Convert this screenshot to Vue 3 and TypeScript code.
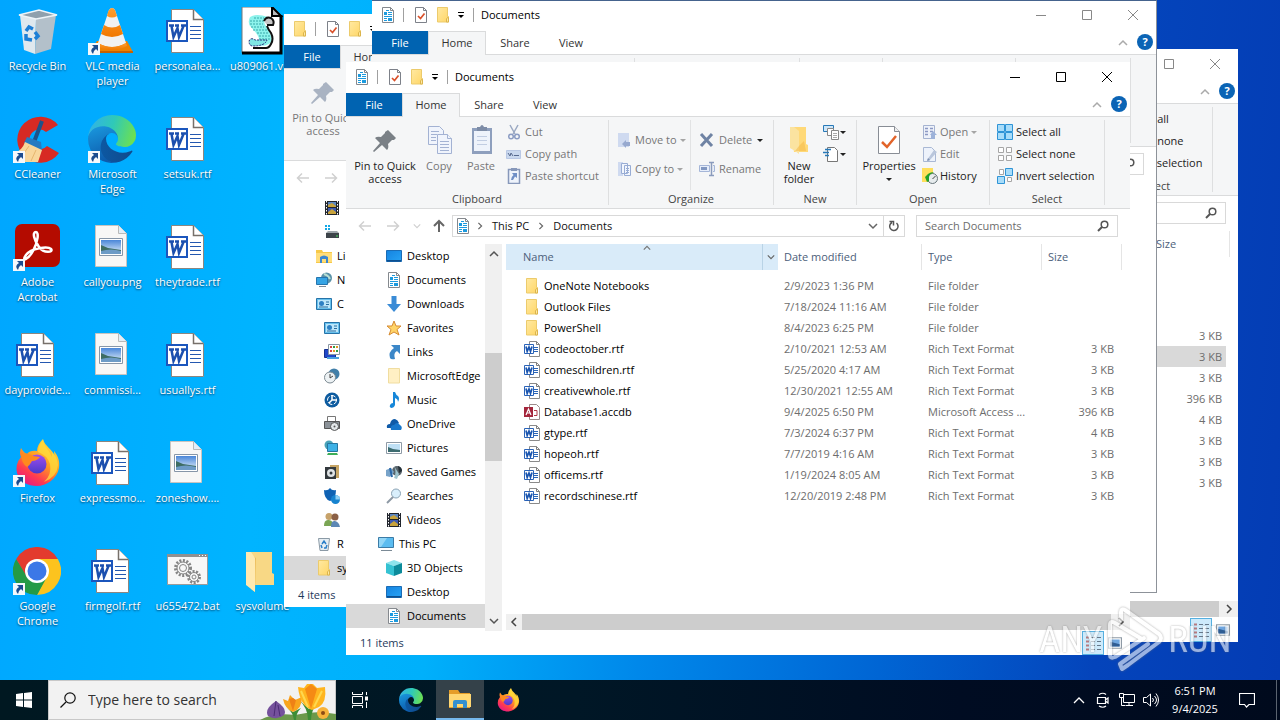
<script setup lang="ts">
import { h } from 'vue'

type Part = 'title' | 'file' | 'home' | 'tabs' | 'pin' | 'ribbon' | 'select' | 'path' | 'sizes' | 'files' | 'status' | 'bars'
interface NavItem { icon: string; label: string; level: number; selected?: boolean }
interface Win {
  id: string; x: number; y: number; title: string; icon: string; status: string
  active?: boolean; pinOff?: boolean; edged?: boolean; selectedFile?: string; nav: NavItem[]; parts: Part[]
}

const Icon = (p: { name: string; size?: number }) =>
  h('svg', { width: p.size ?? 16, height: p.size ?? 16, 'aria-hidden': 'true' }, [h('use', { href: '#' + p.name })])
Icon.props = ['name', 'size']

const has = (w: Win, p: Part) => w.active || w.parts.includes(p)

const desktop = [
  { label: 'Recycle Bin', icon: 'recycle', c: 1, r: 1 },
  { label: 'CCleaner', icon: 'ccleaner', c: 1, r: 2, link: true },
  { label: 'Adobe Acrobat', icon: 'acrobat', c: 1, r: 3, link: true },
  { label: 'dayprovide...', icon: 'word', c: 1, r: 4 },
  { label: 'Firefox', icon: 'firefox', c: 1, r: 5, link: true },
  { label: 'Google Chrome', icon: 'chrome', c: 1, r: 6, link: true },
  { label: 'VLC media player', icon: 'vlc', c: 2, r: 1, link: true },
  { label: 'Microsoft Edge', icon: 'edge', c: 2, r: 2, link: true },
  { label: 'callyou.png', icon: 'image', c: 2, r: 3 },
  { label: 'commissi...', icon: 'image', c: 2, r: 4 },
  { label: 'expressmo...', icon: 'word', c: 2, r: 5 },
  { label: 'firmgolf.rtf', icon: 'word', c: 2, r: 6 },
  { label: 'personalea...', icon: 'word', c: 3, r: 1 },
  { label: 'setsuk.rtf', icon: 'word', c: 3, r: 2 },
  { label: 'theytrade.rtf', icon: 'word', c: 3, r: 3 },
  { label: 'usuallys.rtf', icon: 'word', c: 3, r: 4 },
  { label: 'zoneshow....', icon: 'image', c: 3, r: 5 },
  { label: 'u655472.bat', icon: 'bat', c: 3, r: 6 },
  { label: 'u809061.vbs', icon: 'vbs', c: 4, r: 1 },
  { label: 'sysvolume', icon: 'bigfolder', c: 4, r: 6 },
]

const files = [
  ['OneNote Notebooks', '2/9/2023 1:36 PM', 'File folder', '', 'folder'],
  ['Outlook Files', '7/18/2024 11:16 AM', 'File folder', '', 'folder'],
  ['PowerShell', '8/4/2023 6:25 PM', 'File folder', '', 'folder'],
  ['codeoctober.rtf', '2/10/2021 12:53 AM', 'Rich Text Format', '3 KB', 'word16'],
  ['comeschildren.rtf', '5/25/2020 4:17 AM', 'Rich Text Format', '3 KB', 'word16'],
  ['creativewhole.rtf', '12/30/2021 12:55 AM', 'Rich Text Format', '3 KB', 'word16'],
  ['Database1.accdb', '9/4/2025 6:50 PM', 'Microsoft Access ...', '396 KB', 'access'],
  ['gtype.rtf', '7/3/2024 6:37 PM', 'Rich Text Format', '4 KB', 'word16'],
  ['hopeoh.rtf', '7/7/2019 4:16 AM', 'Rich Text Format', '3 KB', 'word16'],
  ['officems.rtf', '1/19/2024 8:05 AM', 'Rich Text Format', '3 KB', 'word16'],
  ['recordschinese.rtf', '12/20/2019 2:48 PM', 'Rich Text Format', '3 KB', 'word16'],
]

const docNav: NavItem[] = [
  { icon: 'desk', label: 'Desktop', level: 2 },
  { icon: 'doc', label: 'Documents', level: 2 },
  { icon: 'down', label: 'Downloads', level: 2 },
  { icon: 'star', label: 'Favorites', level: 2 },
  { icon: 'links', label: 'Links', level: 2 },
  { icon: 'palefolder', label: 'MicrosoftEdge', level: 2 },
  { icon: 'music', label: 'Music', level: 2 },
  { icon: 'cloud', label: 'OneDrive', level: 2 },
  { icon: 'pics', label: 'Pictures', level: 2 },
  { icon: 'games', label: 'Saved Games', level: 2 },
  { icon: 'lens', label: 'Searches', level: 2 },
  { icon: 'video', label: 'Videos', level: 2 },
  { icon: 'pc', label: 'This PC', level: 1 },
  { icon: 'cube', label: '3D Objects', level: 2 },
  { icon: 'desk', label: 'Desktop', level: 2 },
  { icon: 'doc', label: 'Documents', level: 2, selected: true },
]

const sysNav: NavItem[] = [
  { icon: 'video', label: '', level: 2 },
  { icon: 'drive', label: '', level: 2 },
  { icon: 'lib', label: 'Li', level: 1 },
  { icon: 'net', label: 'N', level: 1 },
  { icon: 'panel', label: 'C', level: 1 },
  { icon: 'panel', label: '', level: 2 },
  { icon: 'appear', label: '', level: 2 },
  { icon: 'clock', label: '', level: 2 },
  { icon: 'ease', label: '', level: 2 },
  { icon: 'printer', label: '', level: 2 },
  { icon: 'netshare', label: '', level: 2 },
  { icon: 'programs', label: '', level: 2 },
  { icon: 'shield', label: '', level: 2 },
  { icon: 'users', label: '', level: 2 },
  { icon: 'bin16', label: 'R', level: 1 },
  { icon: 'folder', label: 'sy', level: 1, selected: true },
]

const windows: Win[] = [
  { id: 'a', x: 454, y: 49, title: 'Documents', icon: 'doc', status: '', selectedFile: 'comeschildren.rtf', nav: [], parts: ['select', 'sizes', 'bars'] },
  { id: 'b', x: 284, y: 14, title: 'sysvolume', icon: 'folder', status: '4 items', pinOff: true, nav: sysNav, parts: ['file', 'home', 'pin', 'status'] },
  { id: 'c', x: 372, y: 0, title: 'Documents', icon: 'doc', status: '', edged: true, nav: [], parts: ['title', 'file', 'home', 'tabs'] },
  { id: 'd', x: 346, y: 62, title: 'Documents', icon: 'doc', status: '11 items', active: true, nav: docNav, parts: [] },
]
</script>

<template>
  <div class="screen">
    <svg class="defs" aria-hidden="true">
      <defs>
        <linearGradient id="gE1" x1="0" y1="0" x2="1" y2="0"><stop offset="0" stop-color="#0c59a4" /><stop offset="1" stop-color="#114a8b" /></linearGradient>
        <linearGradient id="gE2" x1="0" y1="0" x2="0.3" y2="1"><stop offset="0" stop-color="#1b9de2" /><stop offset="1" stop-color="#0d5cad" /></linearGradient>
        <linearGradient id="gE3" x1="0" y1="0.3" x2="1" y2="0.5"><stop offset="0" stop-color="#32b1e8" /><stop offset="0.5" stop-color="#2fc9b8" /><stop offset="1" stop-color="#6ce052" /></linearGradient>
        <linearGradient id="gF" x1="0.8" y1="0" x2="0.2" y2="1"><stop offset="0" stop-color="#ffe742" /><stop offset="0.45" stop-color="#ff9a22" /><stop offset="0.75" stop-color="#ff3b50" /><stop offset="1" stop-color="#e3158b" /></linearGradient>
        <linearGradient id="gP" x1="0" y1="0" x2="0" y2="1"><stop offset="0" stop-color="#a04cf0" /><stop offset="1" stop-color="#4a3bc8" /></linearGradient>
        <linearGradient id="gFo" x1="0" y1="0" x2="1" y2="1"><stop offset="0" stop-color="#ffe9a2" /><stop offset="1" stop-color="#ffd666" /></linearGradient>
        <linearGradient id="gD" x1="0" y1="0" x2="1" y2="1"><stop offset="0" stop-color="#1583e0" /><stop offset="1" stop-color="#27a3f5" /></linearGradient>
        <linearGradient id="gSky" x1="0" y1="0" x2="0" y2="1"><stop offset="0" stop-color="#4a86d8" /><stop offset="1" stop-color="#e6f2fb" /></linearGradient>
        <linearGradient id="gO" x1="0" y1="0" x2="0" y2="1"><stop offset="0" stop-color="#ff9d2e" /><stop offset="1" stop-color="#f07800" /></linearGradient>
      </defs>
      <symbol id="recycle" viewBox="0 0 48 48"><path d="m7 8 16 4-1 35-11-4z" fill="#dfe8ee" /><path d="m43 8-20 4-1 35 16-5z" fill="#b3c0ca" /><path d="m6 8 20-5 18 5-21 4z" fill="#8fa0ad" stroke="#eef4f8" stroke-width="1.500" /><g fill="none" stroke="#1d7fd6" stroke-width="3.500"><path d="m13 24 3-4 4 2M22 25l3 4-3 3M19 33l-6-1 0-5" /></g></symbol>
      <symbol id="vlc" viewBox="0 0 48 48"><path d="M9 34h30l6 11-1 1H2l-1-1z" fill="#ee8100" /><path d="M2 44h43v2H2z" fill="#c96100" /><path d="M10 36 21 3q3-4 6 0l11 33q-14 8-28 0" fill="#f1f1f1" /><path d="m20 5 1-2q3-4 6 0l2 6q-5 3-10 0zM16 18q8 5 16 0l3 9q-11 6-22 0z" fill="url(#gO)" /><path d="m10 36-1 3q15 8 30 0l-1-3q-14 8-28 0" fill="url(#gO)" /></symbol>
      <symbol id="word" viewBox="2 0 48 48"><path d="M10.500 2.500h22l10 10v33h-32z" fill="#fff" stroke="#8b8680" /><path d="M32.500 2.500v10h10" fill="#fff" stroke="#77706a" stroke-width="1.500" /><path d="M29 19.500h11M29 23.500h11M29 27.500h11M29 31.500h11" stroke="#2458b0" /><path d="M6 14h20v20H6z" fill="#fff" stroke="#1b56bd" stroke-width="2" /><path d="M8 18.500h5M14 18.500h4M20 18.500h5M10.500 19l2 11 4-9 1.500 9 4.500-11" fill="none" stroke="#1b4fae" stroke-width="2.500" /></symbol>
      <symbol id="image" viewBox="1 0 48 48"><path d="M8.500 2.500h23l8 8v33h-31z" fill="#f8f7f6" stroke="#c9c4c0" /><path d="M31.500 2.500v8h8" fill="#e3eef7" stroke="#b9b9b9" /><path d="M12.500 15.500h23v17h-23z" fill="#fff" stroke="#8796a8" /><path d="M14 17h20v14H14z" fill="url(#gSky)" /><path d="m14 22 7 3 13 2v4H14z" fill="#3e6d63" /><path d="M14 28q10-3 20 0v3H14z" fill="#6d9bc6" /></symbol>
      <symbol id="bat" viewBox="0 0 48 48"><path d="M4.500 8.500h40v29h-40z" fill="#f7f7f7" stroke="#9b9b9b" /><path d="M4 7h41v3H4z" fill="#909090" /><path d="M36 8.500h7" stroke="#fff" stroke-dasharray="1 2" /><g fill="#f7f7f7" stroke="#858585"><circle cx="20" cy="21" r="7.500" stroke-dasharray="2 1.500" stroke-width="3" /><circle cx="20" cy="21" r="6" /><circle cx="20" cy="21" r="3.500" /><circle cx="31" cy="30" r="5.500" stroke-dasharray="2 1.400" stroke-width="3" /><circle cx="31" cy="30" r="4.500" /><circle cx="31" cy="30" r="2" /></g></symbol>
      <symbol id="bigfolder" viewBox="0 0 48 48"><path d="M10 5h24v21l2 1v11H17z" fill="#f8d885" /><path d="m18 11-1 34-4-3V8z" fill="#edbf5e" /><path d="M8 5h5l4 6v34l-9-7z" fill="#ffe9b0" /></symbol>
      <symbol id="vbs" viewBox="1 1 48 48"><path d="M5 1h31l8 8v38H5z" fill="#fff" stroke="#777" /><path d="M44 9v38H5" fill="none" stroke="#000" stroke-width="3" /><path d="M35 1v9h9z" fill="#bbb" stroke="#000" stroke-width="2" /><path d="M13 11q6-4 18 0-6 4-2 9t6 14q-3 8-17 5 6-4 3-9t-7-9-1-10" fill="#8df3ec" /><path d="M17 12h10M13 15h14M13 18h13M14 21h13M16 24h14M20 27h12M22 30h12M22 33h12" stroke="#38a9ab" stroke-dasharray="2 1" /><path d="M27 15q2-5 7-3 4 3 2 7h-6" fill="#c6c6c6" stroke="#111" stroke-width="2" /><path d="M30 20q1 3 4 7 3 6 0 11-2 4-5 4H16" fill="none" stroke="#111" stroke-width="2" /><path d="M12 35q2-4 6-1 8 0 12 0-2 6-14 6-4 0-4-5z" fill="#7fe7e4" stroke="#227" stroke-dasharray="2 1" /></symbol>
      <symbol id="ccleaner" viewBox="0 0 48 48"><path d="M45 10A23 23 0 1 0 46 38L34 31a10 10 0 1 1-1-14z" fill="#d72a23" /><path d="M29 6 21 27" stroke="#1e5289" stroke-width="4" /><path d="m14 22 14 5 1 9-18-8z" fill="#257ac1" /><path d="m12 27 17 8-4 12H7L1 38q8-2 11-11" fill="#f8d69b" /><path d="m16 31-7 10M23 35l-5 11" stroke="#e6b66e" /></symbol>
      <symbol id="edge" viewBox="0 0 256 256"><path fill="url(#gE1)" d="M231 190.500c-3.400 1.800-6.900 3.400-10.500 4.700a101.500 101.500 0 0 1-35.900 6.400c-47.300 0-88.500-32.500-88.500-74.300a31.500 31.500 0 0 1 16.400-27.300c-42.800 1.800-53.800 46.400-53.800 72.500 0 73.900 68.100 81.400 82.800 81.400 7.900 0 19.800-2.300 27-4.600l1.300-.4a128.300 128.300 0 0 0 66.600-52.800 4 4 0 0 0-5.400-5.600z" /><path fill="url(#gE2)" d="M105.700 241.400a79.200 79.200 0 0 1-22.700-21.300 80.700 80.700 0 0 1 29.500-120c3.200-1.500 8.500-4.100 15.600-4a32.400 32.400 0 0 1 25.700 13 31.900 31.900 0 0 1 6.300 18.700c0-.2 24.500-79.600-80-79.600-43.900 0-80 41.700-80 78.200a130.200 130.200 0 0 0 12.100 56 128 128 0 0 0 156.400 67 75.500 75.500 0 0 1-62.800-8z" /><path fill="url(#gE3)" d="M152.300 148.900c-.8 1-3.300 2.500-3.300 5.700 0 2.600 1.700 5.100 4.700 7.200 14.400 10 41.500 8.700 41.600 8.700a59.600 59.600 0 0 0 30.300-8.300 61.400 61.400 0 0 0 30.400-52.900c.3-22.400-8-37.300-11.300-43.900C223.500 23.900 177.700 0 128 0A128 128 0 0 0 0 126.200c.5-36.500 36.800-66 80-66 3.500 0 23.500.3 42 10.100 16.300 8.600 24.900 18.900 30.800 29.200 6.200 10.700 7.300 24.100 7.300 29.500s-2.700 13.300-7.800 19.900z" /></symbol>
      <symbol id="acrobat" viewBox="0 0 48 48"><rect x="2" y="1" width="45" height="43" rx="7" fill="#b40b00" /><path d="M23 9c-4 0-2 8 3 15s15 5 12 2-20-1-25 6 2 5 7-4 6-19 3-19z" fill="none" stroke="#fff" stroke-width="2.500" /></symbol>
      <symbol id="firefox" viewBox="0 0 48 48"><path d="M8 9q-2 5 0 9Q2 25 4 34c3 9 11 13 20 13s20-7 22-18c1-7-1-12-5-17q0 4 1 6C39 9 32 8 30 0q-6 6-6 12-7-1-10 3-3-1-6-6" fill="url(#gF)" /><path d="M30 1q-5 6-5 12 9 3 12 12 2 11-6 18 13-5 14-17-1-9-6-13 0 4 0 5C35 9 31 8 30 1" fill="#ffdc3c" opacity=".75" /><circle cx="24" cy="25" r="9.500" fill="url(#gP)" /><path d="M8 14q8 0 12 3l7 1q-3 4-8 4-2 4-5 6-6-4-6-14" fill="#ff8a1e" /></symbol>
      <symbol id="chrome" viewBox="0 0 48 48"><path d="M44.800 12A24 24 0 0 1 24 48l9-18 1-18z" fill="#fcc31e" /><path d="M3.200 12A24 24 0 0 0 24 48l10-18H15z" fill="#249a46" /><path d="M24 12h20.800L36 24z" fill="#fcc31e" /><path d="M3.200 12A24 24 0 0 1 44.800 12H24L14 20v10z" fill="#e33b2e" /><circle cx="24" cy="24" r="12" fill="#fff" /><circle cx="24" cy="24" r="9.500" fill="#3b78e7" /></symbol>
      <symbol id="shortcut" viewBox="0 0 12 12"><path d="M0 0h12v12H0z" fill="#f5f8fb" /><path d="M4 2h6v6L8 6q-3 2-3 5-4-4 1-7z" fill="#1c4c8f" /></symbol>

      <symbol id="folder" viewBox="0 0 16 16"><path d="M2.500.5h10v9h1V15h-11z" fill="url(#gFo)" stroke="#eccb6c" /><path d="M12.500 10.500h1V15h-2v-3z" fill="#ffe9a2" stroke="#dbb44c" /></symbol>
      <symbol id="palefolder" viewBox="0 0 16 16"><path d="M2.500.5h11V15h-11z" fill="#fff0c4" stroke="#f0dda0" /></symbol>
      <symbol id="doc" viewBox="0 0 16 16"><path d="M2.500.5h8l3 3v12h-11z" fill="#fff" stroke="#85898e" /><path d="M10.500.5v3h3" fill="none" stroke="#85898e" /><path d="M6 3h3v1H6zM4 5h3v3H4zM8 5h4v1H8zM8 7h4v1H8zM4 9h8v1H4zM4 11h3v1H4zM8 11h4v3H8zM4 13h3v1H4z" fill="#1c9ade" /></symbol>
      <symbol id="check" viewBox="0 0 16 16"><path d="M2.500.5h8l3 3v12h-11z" fill="#fff" stroke="#7d8189" /><path d="M10.500.5v3h3" fill="none" stroke="#7d8189" /><path d="m5 9 2.500 2.500 4-5" fill="none" stroke="#d9502a" stroke-width="1.700" /></symbol>
      <symbol id="word16" viewBox="0 0 16 16"><path d="M5.500.5h7l3 3v12h-10z" fill="#fff" stroke="#8a8a8a" /><path d="M12.500.5v3h3" fill="none" stroke="#7d7d7d" /><path d="M10 6h4v1h-4zM10 8h4v1h-4zM10 10h4v1h-4z" fill="#2b66b8" /><path d="M.5 3.500h9v9h-9z" fill="#fff" stroke="#2a63b8" /><path d="m2 5.500 1.200 5L5 6l1.500 4.500L8 5.500" fill="none" stroke="#1b56b0" stroke-width="1.700" /></symbol>
      <symbol id="access" viewBox="0 0 16 16"><path d="M5.500.5h7l3 3v12h-10z" fill="#fff" stroke="#9b8b8b" /><path d="M10 6.500h3v5h-3" fill="none" stroke="#b23a48" /><path d="M0 3h9v10H0z" fill="#a4263c" /><path d="m2 11 2.500-6L7 11M3 9h3" fill="none" stroke="#fff" stroke-width="1.200" /></symbol>
      <symbol id="desk" viewBox="0 0 16 16"><path d="M.5 2.500h15v11H.5z" fill="url(#gD)" stroke="#1b6cb5" /><path d="M1 12h14v1.500H1z" fill="#0c4f8f" /></symbol>
      <symbol id="down" viewBox="0 0 16 16"><path d="M5.500 0h5v8H15l-7 8-7-8h4.500z" fill="#3a8bd6" /></symbol>
      <symbol id="star" viewBox="0 0 16 16"><path d="m8 1 2 5h5l-4 3.500L13 15l-5-3-5 3 2-5.500L1 6h5z" fill="#ffd469" stroke="#d68b33" /></symbol>
      <symbol id="links" viewBox="0 0 16 16"><path d="M5 1h9v9l-3-3q-4 2-2 8-4 1-5-1-2-6 4-10z" fill="#3b87c8" /></symbol>
      <symbol id="music" viewBox="0 0 16 16"><path d="M7 0h2q1 3 3 4 2 2 0 6 0-3-3-4v7q-1 3-4 3-2-1-1-3t3-2z" fill="#1787d9" /></symbol>
      <symbol id="cloud" viewBox="0 0 16 16"><path d="M1 12q-1-4 3-4 1-5 5-5 3 1 4 4l-7 5z" fill="#0f5ba8" /><path d="M5 14q-1-5 3-5 3-4 6 0 3 2 1 5z" fill="#1877cb" /></symbol>
      <symbol id="pics" viewBox="0 0 16 16"><path d="M.5 2.500h15v11H.5z" fill="#fff" stroke="#8e9aa6" /><path d="M2 4h12v8H2z" fill="#bfe0f5" /><path d="m2 7 5 2 7 1v2H2z" fill="#3d6c70" /></symbol>
      <symbol id="games" viewBox="0 0 16 16"><circle cx="11" cy="7" r="5" fill="#59646b" /><path d="M8 2q3 6 0 12l3 1 2-5z" fill="#9ec4cf" /><path d="m0 6 5-2 3 4-4 5-4-1z" fill="#78a3c9" /><path d="m4 4 2 9" stroke="#2a67a8" stroke-width="2" /><path d="M12 2q4 1 4 5l-3 2z" fill="#243038" /></symbol>
      <symbol id="lens" viewBox="0 0 16 16"><circle cx="10" cy="5.500" r="4.500" fill="#d9effc" stroke="#8aa2b3" /><path d="m7 9-6 6" stroke="#8d99a5" stroke-width="2" /></symbol>
      <symbol id="video" viewBox="0 0 16 16"><path d="M1 1h14v14H1z" fill="#20242c" /><path d="M4 2h8v5H4z" fill="#5c86c0" /><path d="M4 8h8v6H4z" fill="#3b58b0" /><path d="m4 5 4-2 4 3v1H4zM4 12l4-3 4 3v2H4z" fill="#c8a33c" /><path d="M2.500 1v14M13.500 1v14" stroke="#fff" stroke-dasharray="1.500 1.500" /></symbol>
      <symbol id="pc" viewBox="0 0 16 16"><path d="M.5 1.500h15v10H.5z" fill="#5bbcf0" stroke="#3b7ba6" /><path d="M1 2h8L3 11H1z" fill="#92d6f7" /><path d="M3 14.500h11" stroke="#7b8a96" /></symbol>
      <symbol id="cube" viewBox="0 0 16 16"><path d="m0 3 8-3 8 3-8 3z" fill="#8de4ec" /><path d="m0 3 8 3v10l-8-3z" fill="#35c2d2" /><path d="m16 3-8 3v10l8-3z" fill="#0c8b9b" /></symbol>
      <symbol id="drive" viewBox="0 0 16 16"><path d="M1 1h2v2H1zM4 1h2v2H4zM1 4h2v2H1zM4 4h2v2H4z" fill="#12a7e6" /><path d="M2 9h13v5H2z" fill="#3d444a" /><path d="m4 7-2 2h13l-2-2z" fill="#9ea5aa" /><path d="M12 12h2" stroke="#4ae05d" /></symbol>
      <symbol id="lib" viewBox="0 0 16 16"><path d="M0 2h6l1 2h9v11H0z" fill="#f7c948" /><path d="M0 5h16v9H0z" fill="#ffdd7a" /><path d="M4 15V9q4-3 8 0v6h-2v-4H6v4z" fill="#3b87d0" /></symbol>
      <symbol id="net" viewBox="0 0 16 16"><circle cx="10.500" cy="6" r="5.500" fill="#5a91a8" /><path d="M8 2q4 1 6 5" stroke="#b8dfd4" stroke-width="2" fill="none" /><path d="M.5 5.500h11v7H.5z" fill="#35a4e4" stroke="#2575ae" /><path d="M3 14.500h7" stroke="#7b8a96" /></symbol>
      <symbol id="panel" viewBox="0 0 16 16"><path d="M.5 2.500h15v11H.5z" fill="#67c1ee" stroke="#2673a8" /><path d="M2 4h12v8H2z" fill="#bde6fa" /><circle cx="5.500" cy="7.500" r="2.500" fill="#2d80c4" /><path d="M10 6h3M10 8.500h3M3 11h9" stroke="#276da0" /></symbol>
      <symbol id="appear" viewBox="0 0 16 16"><path d="M.5 5.500h11v8H.5z" fill="#2048c8" stroke="#153090" /><path d="M4.500.5h11v10h-11z" fill="#fff" stroke="#8a96a3" /><path d="M6 3h2M6 7h2" stroke="#d94444" stroke-width="2" /><path d="M9 3h2M12 7h2" stroke="#2d9b45" stroke-width="2" /><path d="M12 3h2M9 7h2" stroke="#e09b25" stroke-width="2" /><path d="M3 13h12v2H3z" fill="#4aa0e0" /></symbol>
      <symbol id="clock" viewBox="0 0 16 16"><circle cx="10" cy="6" r="5.500" fill="#417fa9" /><circle cx="6" cy="9.500" r="5.500" fill="#edf2f4" stroke="#7d8a92" /><path d="M6 6v4l3-2" stroke="#444" fill="none" /></symbol>
      <symbol id="ease" viewBox="0 0 16 16"><circle cx="8" cy="8" r="7.500" fill="#0d5b9f" /><circle cx="8" cy="8" r="4.500" fill="none" stroke="#fff" stroke-dasharray="5 1.500" /><path d="M8 3v5h5M8 8l-3 3" stroke="#fff" stroke-width="1.500" fill="none" /></symbol>
      <symbol id="printer" viewBox="0 0 16 16"><path d="M3.500.5h8v5h-8z" fill="#fff" stroke="#777" /><path d="M.5 5.500h15v7H.5z" fill="#8b9298" stroke="#555" /><circle cx="10.500" cy="10.500" r="4" fill="#e4e8ea" stroke="#555" /><circle cx="10.500" cy="10.500" r="1" fill="#555" /></symbol>
      <symbol id="netshare" viewBox="0 0 16 16"><circle cx="5" cy="5" r="4.500" fill="#4aa3b8" /><path d="M3.500 3.500h10v8h-10z" fill="#3db1e6" stroke="#2675a0" /><path d="M4 13h9l1 2H3z" fill="#3cad58" /></symbol>
      <symbol id="programs" viewBox="0 0 16 16"><path d="M6 1h9v13H6z" fill="#c7a565" /><path d="M1 3h11v12H1z" fill="#33393d" /><circle cx="7" cy="9" r="4" fill="#e0e4e6" /><circle cx="7" cy="9" r="1.500" fill="#33393d" /></symbol>
      <symbol id="shield" viewBox="0 0 16 16"><path d="M0 2q4 1 6-2 2 3 6 2 0 9-6 11Q0 11 0 2" fill="#0f62b4" /><circle cx="11.500" cy="11.500" r="4.500" fill="#1783cf" /><path d="M11.500 11.500V7a4.500 4.500 0 0 1 4.500 4.500z" fill="#8fd0f5" /></symbol>
      <symbol id="users" viewBox="0 0 16 16"><circle cx="5" cy="4.500" r="3.500" fill="#c7a26a" /><path d="M0 14q0-7 5-6t4 6z" fill="#7aa554" /><circle cx="11" cy="5" r="3.500" fill="#8b6046" /><path d="M7 15q0-7 4-6t5 6z" fill="#5d88b5" /></symbol>
      <symbol id="bin16" viewBox="0 0 16 16"><path d="M2.500 2.500h11l-1.500 12H4z" fill="#e6eef3" stroke="#8b9aa6" /><path d="m6 8 2-3 2 3M11 9l-1 3H8M6 12l-1-3" stroke="#2b7fc9" stroke-width="1.500" fill="none" /></symbol>

      <symbol id="pin" viewBox="0 0 32 32"><path d="m19 6 8 8-2 2h-2l-4 4q1 4-1 6l-5-5-8 7-1-1 7-8-5-5q2-2 6-1l4-4V8z" fill="currentColor" /></symbol>
      <symbol id="copy" viewBox="0 0 32 32"><g fill="#f0f4fc" stroke="#a3b2d3"><path d="M5.500 2.500h11l4 4v14h-15z" /><path d="M8 7.500h8M8 10.500h6M8 13.500h5M8 16.500h5" /><path d="M14.500 10.500h10l4 4v15h-14z" /><path d="M24.500 10.500v4h4M17 17.500h9M17 20.500h9M17 23.500h9M17 26.500h9" /></g></symbol>
      <symbol id="paste" viewBox="0 0 32 32"><path d="M7 4h20v26H7z" fill="#8e9fbd" /><path d="M9 7h16v20H9z" fill="#eef3fb" /><path d="M12 3h3q2-4 4 0h3v4H12z" fill="#7d8ca6" /><path d="M12 12.500h10M12 16.500h10M12 20.500h10" stroke="#c1cde2" /></symbol>
      <symbol id="cut" viewBox="0 0 16 16"><path d="m4 1 5 9M12 1l-5 9" stroke="#9aa8c2" stroke-width="1.500" /><circle cx="5" cy="12.500" r="2.300" fill="none" stroke="#8b9cc3" stroke-width="1.500" /><circle cx="11" cy="12.500" r="2.300" fill="none" stroke="#8b9cc3" stroke-width="1.500" /></symbol>
      <symbol id="cpath" viewBox="0 0 16 16"><path d="M.5 4.500h14v8H.5z" fill="#c9d8ee" stroke="#b9c8e4" /><path d="m2 7 2 3 1-3 2 3M8 9.500h5" stroke="#57698e" fill="none" /></symbol>
      <symbol id="pshort" viewBox="0 0 16 16"><path d="M2.500 1.500h11v14h-11z" fill="#eef3fb" stroke="#8798ba" stroke-width="1.500" /><path d="M5 0h6v3H5z" fill="#8798ba" /><path d="M6 5h5v5L9 8.500 7 12H5q0-3 2.500-5z" fill="#6f8fc6" /></symbol>
      <symbol id="moveto" viewBox="0 0 16 16"><path d="M1 1h11v14H1z" fill="#cfdaf0" /><path d="m5 12 4-4v2h4v4H9v2z" fill="#97a9cf" /></symbol>
      <symbol id="copyto" viewBox="0 0 16 16"><path d="M1 1h5v14H1z" fill="#cfdaf0" /><path d="M4.500 2.500h6v10h-6zM7.500 4.500h6v10h-6z" fill="#f2f6fd" stroke="#98acd4" /><path d="M9 7.500h3M9 9.500h3M9 11.500h3" stroke="#98acd4" /></symbol>
      <symbol id="del" viewBox="0 0 16 16"><path d="m2 2 11 12M13 2 2 14" stroke="#6f83a4" stroke-width="3" /></symbol>
      <symbol id="ren" viewBox="0 0 16 16"><path d="M.5 4.500h10v6H.5zM14 4.500h1.500v6H14" fill="#e7eefa" stroke="#a5b6d8" /><path d="M2 7.500h6" stroke="#8298c2" stroke-width="3" /><path d="M10 1.500h5M10 14.500h5M12.500 1v14" stroke="#8a9bbd" stroke-width="1.500" /></symbol>
      <symbol id="newfolder" viewBox="0 0 32 32"><path d="M8 3h15v17l2 1v7H11z" fill="#ffd978" /><path d="M7 3h4l5 4v23l-4-3-5-3z" fill="#fbe3a0" /><path d="m16 22 5-5 2 10H12z" fill="#f5bc4c" opacity=".6" /></symbol>
      <symbol id="newitem" viewBox="0 0 16 16"><path d="M.5 1.500h10v6H.5z" fill="#cfe6f8" stroke="#2779b8" /><path d="M4.500 4.500h6v7h-6z" fill="#fff" stroke="#888" /><path d="M8.500 6.500h7v9h-7z" fill="#fff" stroke="#888" /><path d="M10 9.500h4M10 11.500h4M10 13.500h4" stroke="#aaa" /></symbol>
      <symbol id="easy" viewBox="0 0 16 16"><path d="M4.500 1.500h7l3 3v11h-10z" fill="#fff" stroke="#777" /><path d="M2 3.500h6M0 6.500h6M2 9.500h4" stroke="#2779b8" stroke-width="1.300" /></symbol>
      <symbol id="props" viewBox="0 0 32 32"><path d="M5.500 2.500h16l5 5v22h-21z" fill="#fff" stroke="#888d95" /><path d="M21.500 2.500v5h5" fill="#eee" stroke="#888d95" /><path d="m9 18 5 5 9-11" fill="none" stroke="#e2642a" stroke-width="2.500" /></symbol>
      <symbol id="open" viewBox="0 0 16 16"><path d="M1.500 1.500h11v13h-11z" fill="#eef2fa" stroke="#a5b3d1" /><path d="M3 4.500h3M8 4.500h3M3 7.500h3M8 7.500h3M3 10.500h3" stroke="#8c99c4" stroke-width="1.500" /><path d="M11 7l4 4h-2v4H9v-4H8z" fill="#9db2d9" /></symbol>
      <symbol id="edit" viewBox="0 0 16 16"><path d="M1.500 1.500h8l4 4v10h-12z" fill="#edf2fb" stroke="#a9b8d4" /><path d="m5 14 7-10 3 2-8 9z" fill="#b9c6dc" /><path d="m5 15 1-3 2 2z" fill="#8093b5" /></symbol>
      <symbol id="history" viewBox="0 0 16 16"><path d="M0 0h11v14H0z" fill="#ffdf5c" /><circle cx="10.500" cy="10.500" r="5" fill="#e7ecee" stroke="#66747a" /><path d="m5 14-2-5 3-3q4-3 6-1-4 0-5 4v4z" fill="#23a127" /><path d="M10.500 11l3-3" stroke="#444" /></symbol>
      <symbol id="selall" viewBox="0 0 16 16"><g fill="#a8dcf9" stroke="#2f94d6"><path d="M.5.5h7v7h-7zM8.500.5h7v7h-7zM.5 8.500h7v7h-7zM8.500 8.500h7v7h-7z" /></g></symbol>
      <symbol id="selnone" viewBox="0 0 16 16"><g fill="#fff" stroke="#a6a6a6"><path d="M1.500 1.500h5v5h-5zM9.500 1.500h5v5h-5zM1.500 9.500h5v5h-5zM9.500 9.500h5v5h-5z" /></g></symbol>
      <symbol id="selinv" viewBox="0 0 16 16"><path d="M2.500 1.500h4v5h-4zM10.500 9.500h4v4h-4z" fill="#fff" stroke="#a6a6a6" /><path d="M8.500.5h7v7h-7zM.5 8.500h7v7h-7z" fill="#a8dcf9" stroke="#2f94d6" /></symbol>

      <symbol id="left" viewBox="0 0 16 16"><path d="M14 8H3M7 3.500 2.500 8 7 12.500" fill="none" stroke="currentColor" stroke-width="1.500" /></symbol>
      <symbol id="right" viewBox="0 0 16 16"><path d="M2 8h11M9 3.500 13.500 8 9 12.500" fill="none" stroke="currentColor" stroke-width="1.500" /></symbol>
      <symbol id="up" viewBox="0 0 16 16"><path d="M8 14V3M3 8l5-5 5 5" fill="none" stroke="currentColor" stroke-width="2" /></symbol>
      <symbol id="chevd" viewBox="0 0 10 10"><path d="m1 3 4 4 4-4" fill="none" stroke="currentColor" stroke-width="1.500" /></symbol>
      <symbol id="chevu" viewBox="0 0 10 10"><path d="m1 7 4-4 4 4" fill="none" stroke="currentColor" stroke-width="1.500" /></symbol>
      <symbol id="chevr" viewBox="0 0 10 10"><path d="m3 1 4 4-4 4" fill="none" stroke="currentColor" stroke-width="1.500" /></symbol>
      <symbol id="chevl" viewBox="0 0 10 10"><path d="M7 1 3 5l4 4" fill="none" stroke="currentColor" stroke-width="1.500" /></symbol>
      <symbol id="caret" viewBox="0 0 6 6"><path d="M0 2h6L3 5z" fill="currentColor" /></symbol>
      <symbol id="qcaret" viewBox="0 0 8 8"><path d="M1 1.500h6" stroke="currentColor" /><path d="M1 4h6L4 7z" fill="currentColor" /></symbol>
      <symbol id="refresh" viewBox="0 0 12 12"><path d="M8.500 3A4.200 4.200 0 1 1 4 2.500M1.500 1.500h4v4" fill="none" stroke="currentColor" stroke-width="1.500" /></symbol>
      <symbol id="mag" viewBox="0 0 12 12"><circle cx="7.500" cy="4.500" r="3.300" fill="none" stroke="currentColor" stroke-width="1.500" /><path d="M5 7 1 11" stroke="currentColor" stroke-width="2" /></symbol>
      <symbol id="min" viewBox="0 0 10 10"><path d="M0 5.500h10" stroke="currentColor" /></symbol>
      <symbol id="max" viewBox="0 0 10 10"><path d="M.5.5h9v9h-9z" fill="none" stroke="currentColor" /></symbol>
      <symbol id="close" viewBox="0 0 10 10"><path d="m0 0 10 10M10 0 0 10" stroke="currentColor" /></symbol>
      <symbol id="vdetails" viewBox="0 0 16 16"><path d="M1 2.500h3M1 6.500h3M1 10.500h3M1 14.500h3" stroke="#b57a80" stroke-width="2" /><path d="M6 2.500h4M12 2.500h4M6 6.500h4M12 6.500h4M6 10.500h4M12 10.500h4M6 14.500h4M12 14.500h4" stroke="#66788a" /></symbol>
      <symbol id="vthumb" viewBox="0 0 12 12"><path d="M.5 1.500h11v9H.5z" fill="#fff" stroke="#8f9aa5" /><path d="M2 3h8v6H2z" fill="#6fa6e0" /><path d="m2 5 8 2v2H2z" fill="#2f5d94" /></symbol>

      <symbol id="winlogo" viewBox="0 0 16 16"><path d="m0 2 7-1v6.500H0zM8 1l8-1v7.500H8zM0 8.500h7V15l-7-1zM8 8.500h8V16l-8-1z" fill="#fff" /></symbol>
      <symbol id="find" viewBox="0 0 16 16"><circle cx="10" cy="6" r="5.200" fill="none" stroke="#111" stroke-width="1.200" /><path d="m6 10-5.500 5.500" stroke="#111" stroke-width="1.200" /></symbol>
      <symbol id="taskview" viewBox="0 0 16 16"><path d="M.5 0v2.500h10V0M.5 16v-2.500h10V16M.5 4.500h10v7H.5zM14.500 0v3M14.500 10v6" fill="none" stroke="#fff" /><path d="M13 4.500h3v4h-3z" fill="#fff" /></symbol>
      <symbol id="explorer" viewBox="0 0 24 24"><path d="M1 3h9l2 3h10v15H1z" fill="#e59d28" /><path d="M1 7h22v13H1z" fill="#ffd772" /><path d="M5 21v-6q0-2 2-2h10q2 0 2 2v6h-4v-4H9v4z" fill="#348fce" /></symbol>
      <symbol id="meet" viewBox="0 0 16 16"><path d="M2.500 5.500h8v6h-8zM11 7.500l2-1.500v5l-2-1.500M4 2.500q4-2.500 7 0M4 14q4 2.500 7 0" fill="none" stroke="#fff" stroke-width="1.200" /></symbol>
      <symbol id="lan" viewBox="0 0 16 16"><path d="M4.500 2.500h11v8h-11zM7 13.500h7M10 11v3M.5 1.500h4v4h-4zM2.500 6v7.500h4" fill="none" stroke="#fff" /></symbol>
      <symbol id="vol" viewBox="0 0 16 16"><path d="M.5 5.500h3l4-3.500v12l-4-3.500h-3zM9.500 6q2 2 0 4M11.500 4q4 4 0 8M13 1.500q5 6.500 0 13" fill="none" stroke="#fff" /></symbol>
      <symbol id="note" viewBox="0 0 16 16"><path d="M.5 1.500h15v11H10L7.500 15 5.500 12.500h-5z" fill="none" stroke="#fff" stroke-width="1.200" /></symbol>
    </svg>

    <main class="desktop">
      <div class="icons">
        <button v-for="d in desktop" :key="d.label" class="dicon" :style="{ gridColumn: d.c, gridRow: d.r }">
          <span class="pic"><Icon :name="d.icon" :size="48" /><Icon v-if="d.link" class="ov" name="shortcut" :size="12" /></span>
          <span class="dlabel">{{ d.label }}</span>
        </button>
      </div>

      <section v-for="w in windows" :key="w.id" class="win" :class="{ active: w.active, edged: w.edged }" :style="{ left: w.x + 'px', top: w.y + 'px' }" :aria-label="w.title">
        <header class="titlebar">
          <Icon :name="w.icon" /><i class="tsep"></i>
          <button class="q" aria-label="Properties"><Icon name="check" /></button>
          <button class="q" aria-label="New folder"><Icon name="folder" /></button>
          <button class="q narrow" aria-label="Customize toolbar"><Icon name="qcaret" :size="8" /></button>
          <i class="tsep2"></i>
          <span class="title"><template v-if="has(w, 'title')">{{ w.title }}</template></span>
          <button class="wb" aria-label="Minimize"><Icon name="min" :size="10" /></button>
          <button class="wb" aria-label="Maximize"><Icon name="max" :size="10" /></button>
          <button class="wb" aria-label="Close"><Icon name="close" :size="10" /></button>
        </header>
        <nav class="tabs">
          <button v-if="has(w, 'file')" class="tab file">File</button>
          <button v-if="has(w, 'home')" class="tab home">Home</button>
          <template v-if="has(w, 'tabs')"><button class="tab">Share</button><button class="tab view">View</button></template>
          <button class="collapse" aria-label="Collapse ribbon"><Icon name="chevu" :size="10" /></button>
          <button class="help" aria-label="Help">?</button>
        </nav>
        <div class="ribbon">
          <div class="group clip">
            <div class="gbody">
              <button v-if="has(w, 'pin')" class="big pinb" :class="{ off: w.pinOff }"><Icon name="pin" :size="32" /><span>Pin to Quick access</span></button>
              <template v-if="has(w, 'ribbon')">
                <button class="big off"><Icon name="copy" :size="32" /><span>Copy</span></button>
                <button class="big off"><Icon name="paste" :size="32" /><span>Paste</span></button>
                <div class="stack">
                  <button class="small off"><Icon name="cut" />Cut</button>
                  <button class="small off"><Icon name="cpath" />Copy path</button>
                  <button class="small off"><Icon name="pshort" />Paste shortcut</button>
                </div>
              </template>
            </div>
            <span v-if="has(w, 'ribbon')" class="glabel">Clipboard</span>
          </div>
          <div class="group org">
            <template v-if="has(w, 'ribbon')">
              <div class="gbody">
                <div class="stack wide">
                  <button class="small off"><Icon name="moveto" />Move to<Icon class="ar" name="caret" :size="6" /></button>
                  <button class="small off"><Icon name="copyto" />Copy to<Icon class="ar" name="caret" :size="6" /></button>
                </div>
                <div class="stack wide second">
                  <button class="small off dk"><Icon name="del" />Delete<Icon class="ar" name="caret" :size="6" /></button>
                  <button class="small off"><Icon name="ren" />Rename</button>
                </div>
              </div>
              <span class="glabel">Organize</span>
            </template>
          </div>
          <div class="group new">
            <template v-if="has(w, 'ribbon')">
              <div class="gbody">
                <button class="big nf"><Icon name="newfolder" :size="32" /><span>New folder</span></button>
                <div class="stack tight">
                  <button class="small mini" aria-label="New item"><Icon name="newitem" /><Icon name="caret" :size="6" /></button>
                  <button class="small mini" aria-label="Easy access"><Icon name="easy" /><Icon name="caret" :size="6" /></button>
                </div>
              </div>
              <span class="glabel">New</span>
            </template>
          </div>
          <div class="group opn">
            <template v-if="has(w, 'ribbon')">
              <div class="gbody">
                <button class="big prop"><Icon name="props" :size="32" /><span>Properties</span><Icon class="bc" name="caret" :size="6" /></button>
                <div class="stack">
                  <button class="small off"><Icon name="open" />Open<Icon class="ar" name="caret" :size="6" /></button>
                  <button class="small off"><Icon name="edit" />Edit</button>
                  <button class="small"><Icon name="history" />History</button>
                </div>
              </div>
              <span class="glabel">Open</span>
            </template>
          </div>
          <div class="group sel">
            <template v-if="has(w, 'select')">
              <div class="gbody">
                <div class="stack">
                  <button class="small"><Icon name="selall" />Select all</button>
                  <button class="small"><Icon name="selnone" />Select none</button>
                  <button class="small"><Icon name="selinv" />Invert selection</button>
                </div>
              </div>
              <span class="glabel">Select</span>
            </template>
          </div>
        </div>
        <div class="addr">
          <button class="nb dim" aria-label="Back"><Icon name="left" /></button>
          <button class="nb dim" aria-label="Forward"><Icon name="right" /></button>
          <button class="nb recent dim" aria-label="Recent"><Icon name="chevd" :size="8" /></button>
          <button class="nb upb" aria-label="Up"><Icon name="up" /></button>
          <div class="path">
            <template v-if="has(w, 'path')">
              <Icon :name="w.icon" /><Icon class="pc" name="chevr" :size="8" />
              <button class="crumb">This PC</button><Icon class="pc" name="chevr" :size="8" />
              <button class="crumb">{{ w.title }}</button>
            </template>
            <button class="drop" aria-label="Previous locations"><Icon name="chevd" :size="10" /></button>
            <button class="refresh" aria-label="Refresh"><Icon name="refresh" :size="12" /></button>
          </div>
          <label class="search"><input type="text" :placeholder="w.active ? 'Search ' + w.title : ''" :aria-label="'Search ' + w.title" /><Icon name="mag" :size="12" /></label>
        </div>
        <div class="body">
          <ul class="nav">
            <li v-for="(n, i) in w.nav" :key="i"><a href="#" :class="['l' + n.level, { on: n.selected }]"><Icon :name="n.icon" />{{ n.label }}</a></li>
          </ul>
          <div v-if="has(w, 'bars')" class="vbar"><Icon name="chevu" :size="10" /><i class="vthumb"></i><Icon name="chevd" :size="10" /></div>
          <div v-if="has(w, 'sizes')" class="list">
            <table>
              <colgroup><col class="cn" /><col class="cd" /><col class="ct" /><col class="cs" /></colgroup>
              <thead>
                <tr v-if="has(w, 'files')">
                  <th class="hn"><span class="hcell">Name<Icon class="sort" name="chevu" :size="8" /><button class="hdrop" aria-label="Filter by name"><Icon name="chevd" :size="8" /></button></span></th>
                  <th>Date modified</th><th>Type</th><th>Size</th>
                </tr>
                <tr v-else><td colspan="3"></td><th>Size</th></tr>
              </thead>
              <tbody>
                <tr v-for="f in files" :key="f[0]" :class="{ on: w.selectedFile === f[0] }">
                  <template v-if="has(w, 'files')">
                    <td class="fn"><span class="fcell"><Icon :name="f[4]" />{{ f[0] }}</span></td>
                    <td>{{ f[1] }}</td><td>{{ f[2] }}</td>
                  </template>
                  <td v-else colspan="3"></td>
                  <td class="sz">{{ f[3] }}</td>
                </tr>
              </tbody>
            </table>
            <div class="hbar"><Icon name="chevl" :size="10" /><i class="hthumb"></i><Icon name="chevr" :size="10" /></div>
          </div>
        </div>
        <footer class="status">
          <span v-if="has(w, 'status')">{{ w.status }}</span>
          <template v-if="has(w, 'bars')">
            <button class="vd" aria-label="Details view"><Icon name="vdetails" /></button>
            <button class="vt" aria-label="Large icons view"><Icon name="vthumb" :size="14" /></button>
          </template>
        </footer>
      </section>

      <div class="mark">
        <span>ANY</span>
        <svg width="58" height="66" viewBox="0 0 58 66" aria-hidden="true"><g fill="none" stroke="#fff" stroke-width="4" stroke-linejoin="round" stroke-linecap="round"><path d="M15 13V5q0-4 4-2l34 24q4 4 0 8L22 58l-6 4-2-5 28-20" /><path d="M4 18q0-5 5-2l27 16M4 18v30q0 4 5 2l29-19" /></g></svg>
        <span>RUN</span>
      </div>
    </main>

    <footer class="taskbar">
      <button class="start" aria-label="Start"><Icon name="winlogo" /></button>
      <label class="tsearch"><Icon name="find" /><input type="text" placeholder="Type here to search" aria-label="Type here to search" />
        <svg class="flowers" width="76" height="39" viewBox="0 0 76 39" aria-hidden="true"><path d="M0 39q14-8 35-5 20-5 41-1v6z" fill="#6c994b" /><path d="M16 20q12 8 8 14-7 6-16 1Q4 28 16 20" fill="#75519c" /><path d="m16 20-2 15M18 24l2 11" stroke="#4b2c74" /><path d="M34 39q-1-8-7-12l6 4 8-4q-5 5-5 12M48 39q0-12-9-20l10 9 11-9q-9 9-9 20" fill="#3d8d35" /><path d="m23 18 5 2 2-6 5 5 7-3q0 12-9 15-8-3-10-13" fill="#f9a51c" /><path d="m29 18 4 12 3-11-3-2z" fill="#ef8115" /><path d="m38 6 6 1 3-4 6 0 4 4 8-1q2 15-6 20l-7 3q-12-4-14-23" fill="#ffb51f" /><path d="m45 8 6 20 6-20-6-5z" fill="#f58a14" /><path d="m41 10 7 16M62 10l-8 16" stroke="#ffd84e" stroke-width="2" /><circle cx="63" cy="32" r="6" fill="#f7b33a" /><circle cx="63" cy="32" r="2" fill="#8d4b15" /></svg>
      </label>
      <button class="tb" aria-label="Task view"><Icon name="taskview" /></button>
      <button class="tb edgeb" aria-label="Microsoft Edge"><Icon name="edge" :size="24" /></button>
      <button class="tb cur" aria-label="File Explorer"><Icon name="explorer" :size="24" /></button>
      <button class="tb" aria-label="Firefox"><Icon name="firefox" :size="24" /></button>
      <div class="tray">
        <button aria-label="Show hidden icons"><svg width="12" height="8" viewBox="0 0 12 8"><path d="m1 7 5-5 5 5" fill="none" stroke="#fff" stroke-width="1.300" /></svg></button>
        <button aria-label="Meet now"><Icon name="meet" /></button>
        <button aria-label="Network"><Icon name="lan" /></button>
        <button aria-label="Volume"><Icon name="vol" /></button>
        <button class="clockb"><span>6:51 PM</span><span>9/4/2025</span></button>
        <button class="noteb" aria-label="Notifications"><Icon name="note" /></button>
        <i class="peek"></i>
      </div>
    </footer>
  </div>
</template>

<style>
body { margin: 0; overflow: hidden; }
</style>

<style scoped>
.screen, .screen * { box-sizing: border-box; }
.screen { display: flex; flex-direction: column; height: 100vh; overflow: hidden; font: 11px/16px "Open Sans", "Noto Sans", sans-serif; color: #000; }
.defs { position: absolute; width: 0; height: 0; }
button, input { font: inherit; color: inherit; background: none; border: 0; padding: 0; margin: 0; }
a { color: inherit; text-decoration: none; }
svg { display: block; flex: none; }
i { flex: none; }

.desktop { position: relative; flex: 1; overflow: hidden; background: linear-gradient(95deg, #00a6ff 0%, #00b4ff 22%, #00b0fb 36%, #0088ea 52%, #0065d4 70%, #0444bb 86%, #043cb4 100%); }
.icons { display: grid; grid-template-columns: repeat(4, 75px); grid-auto-rows: 108px; padding-top: 7px; }
.dicon { display: flex; flex-direction: column; align-items: center; color: #fff; line-height: 15px; text-shadow: 0 1px 2px #00395f; }
.pic { position: relative; margin-right: 2px; }
.ov { position: absolute; left: 0; bottom: 0; }
.dlabel { max-width: 74px; margin-top: 3px; }

.win { position: absolute; display: flex; flex-direction: column; width: 784px; height: 593px; background: #fff; overflow: hidden; }
.win.edged { width: 785px; padding-right: 1px; }
.win.edged::after { content: ""; position: absolute; inset: 0; border: 1px solid #8d9299; border-top-color: #45638d; border-left: 0; pointer-events: none; }
.titlebar { display: flex; align-items: center; height: 31px; padding: 0 0 2px 8px; flex: none; }
.tsep, .tsep2 { width: 1px; height: 14px; background: #a0a0a0; margin: 0 9px 0 7px; }
.tsep2 { margin: 0 7px 0 0; }
.q { width: 22px; height: 22px; display: flex; align-items: center; }
.q.narrow { width: 16px; }
.title { flex: 1; }
.wb { width: 46px; height: 28px; display: grid; place-items: center; color: #888; }
.active .wb { color: #000; }
.tabs { display: flex; height: 24px; flex: none; border-bottom: 1px solid #dadbdc; color: #333; }
.tab { width: 58px; height: 23px; }
.tab.file { width: 56px; background: #0063b1; color: #fff; }
.tab.home { height: 24px; padding-bottom: 2px; background: #f5f6f7; border: 1px solid #dadbdc; border-bottom: 0; }
.tab.view { width: 54px; }
.collapse { margin-left: auto; width: 20px; display: grid; place-items: center; color: #aaa; }
.help { width: 16px; height: 16px; border-radius: 50%; background: #0b64b5; color: #fff; font-weight: 700; line-height: 16px; margin: 3px 3px 0 4px; text-align: center; }

.ribbon { display: flex; height: 92px; flex: none; background: #f5f6f7; border-bottom: 1px solid #dadbdc; color: #222; }
.group { display: flex; flex-direction: column; margin: 3px 0; border-right: 1px solid #dedfe0; flex: none; }
.clip { width: 263px; } .org { width: 165px; } .new { width: 83px; } .opn { width: 133px; } .sel { width: 115px; }
.gbody { display: flex; height: 70px; flex: none; }
.glabel { text-align: center; color: #444; line-height: 18px; }
.big { display: flex; flex-direction: column; align-items: center; justify-content: flex-start; padding-top: 4px; width: 42px; line-height: 13px; flex: none; }
.big span { margin-top: 3px; }
.pinb { width: 66px; margin-left: 6px; color: #222; }
.pinb svg { color: #7a8086; }
.off { color: #777; }
.pinb.off svg { color: #a9b3c2; }
.stack { display: flex; flex-direction: column; margin-left: 3px; padding-top: 1px; }
.small { display: flex; align-items: center; height: 22px; gap: 3px; white-space: nowrap; }
.stack.wide { padding-top: 5px; margin-left: 8px; width: 78px; border-right: 1px solid #e2e3e4; }
.wide .small { height: 29px; gap: 2px; }
.stack.wide.second { border: 0; margin-left: 8px; }
.second .small { gap: 4px; }
.off .ar { color: #a5a5a5; margin-left: 1px; }
.small.dk .ar { color: #222; }
.nf { width: 44px; margin-left: 3px; }
.stack.tight { margin-left: 2px; }
.mini { gap: 1px; }
.prop { width: 56px; margin-left: 4px; }
.bc { margin-top: 4px; }
.opn .stack { margin-left: 5px; }
.opn .small { gap: 2px; }
.sel .stack { margin-left: 7px; }
.clip .stack { margin-left: 4px; }

.addr { display: flex; align-items: center; height: 35px; flex: none; color: #111; padding: 0 0 1px 11px; }
.nb { width: 28px; display: flex; color: #666; }
.nb.dim { color: #d0d0d0; }
.nb.recent { width: 18px; }
.nb.upb { width: 21px; }
.path { display: flex; align-items: center; width: 453px; height: 22px; border: 1px solid #d9d9d9; padding-left: 2px; }
.pc { margin: 0 8px 0 5px; color: #666; }
.crumb + .pc { margin: 0 8px; }
.drop { margin-left: auto; width: 20px; display: grid; place-items: center; color: #666; }
.refresh { width: 21px; height: 20px; border-left: 1px solid #d9d9d9; display: grid; place-items: center; color: #555; }
.search { display: flex; align-items: center; width: 202px; height: 22px; margin-left: 11px; padding: 0 8px; border: 1px solid #d9d9d9; color: #555; }
.search input { flex: 1; min-width: 0; outline: 0; }
.search input::placeholder { color: #6d6d6d; opacity: 1; }

.body { display: flex; flex: 1; min-height: 0; }
.nav { list-style: none; margin: 0; padding: 0; width: 139px; overflow: hidden; flex: none; }
.nav a { display: flex; align-items: center; height: 24px; gap: 5px; padding-left: 40px; white-space: nowrap; }
.nav a.l1 { padding-left: 32px; }
.nav a.on { background: #d9d9d9; }
.vbar { display: flex; flex-direction: column; align-items: center; width: 17px; background: #f0f0f0; padding: 5px 0; color: #555; flex: none; }
.vthumb { width: 17px; height: 108px; background: #cdcdcd; margin: 94px 0 auto; }
.list { flex: 1; min-width: 0; display: flex; flex-direction: column; justify-content: space-between; margin-left: 4px; }
table { table-layout: fixed; border-collapse: separate; border-spacing: 0; width: 616px; color: #6d6d6d; }
.cn { width: 272px; } .cd { width: 144px; } .ct { width: 120px; } .cs { width: 80px; }
th { height: 26px; padding: 0 0 0 6px; font-weight: 400; text-align: left; color: #4c607a; border-right: 1px solid #e5e5e5; }
th.hn { padding: 0; background: #d9ebf9; border-right: 0; }
.hcell { display: flex; align-items: center; padding-left: 17px; height: 26px; }
.sort { margin-left: 89px; align-self: flex-start; color: #777; }
.hdrop { margin-left: auto; width: 16px; height: 26px; border-left: 1px solid #b9d3e6; display: grid; place-items: center; color: #666; }
tbody::before { content: ""; display: table-row; height: 5px; }
td { height: 21px; padding: 0 0 0 6px; white-space: nowrap; }
td.fn { padding-left: 18px; color: #000; }
.fcell { display: flex; align-items: center; gap: 4px; }
td.sz { text-align: right; padding-right: 4px; border-right: 4px solid transparent; background-clip: padding-box; }
tr.on td { background-color: #d9d9d9; }
.hbar { display: flex; align-items: center; height: 16px; margin-bottom: 1px; background: #f0f0f0; padding: 0 4px 0 3px; color: #444; }
.hthumb { width: 589px; height: 16px; background: #cdcdcd; margin: 0 auto 0 3px; }
.status { display: flex; height: 24px; flex: none; align-items: center; padding-left: 14px; color: #1e395b; }
.vd { width: 22px; height: 24px; margin-left: auto; display: grid; place-items: center; background: #cdeafb; border: 1px solid #56b0e0; }
.vt { width: 26px; padding-left: 4px; }

.mark { position: absolute; left: 1039px; top: 607px; display: flex; align-items: center; opacity: .6; font: 400 37px/40px "Roboto Condensed", Roboto, sans-serif; color: #fff; text-shadow: 0 0 2px #666; }
.mark svg { margin: 0 4px; filter: drop-shadow(0 0 1px #777); }

.taskbar { position: relative; display: flex; height: 40px; flex: none; background: linear-gradient(90deg, #001821 0%, #001726 45%, #000c22 75%, #000a1d 100%); color: #fff; }
.start { width: 48px; display: grid; place-items: center; }
.tsearch { display: flex; align-items: center; width: 288px; background: #f2f2f2; border: 1px solid #c8c8c8; padding-left: 11px; gap: 12px; font-size: 14px; color: #333; }
.tsearch input { width: 160px; outline: 0; }
.tsearch input::placeholder { color: #333; opacity: 1; }
.flowers { margin-left: auto; }
.tb { width: 48px; display: grid; place-items: center; }
.edgeb { width: 52px; padding-left: 2px; }
.cur { background: #344149; border-bottom: 2px solid #76b9ed; }
.tray { display: flex; margin-left: auto; }
.tray button { width: 24px; display: grid; place-items: center; }
.tray .clockb { width: 64px; display: flex; flex-direction: column; align-items: center; justify-content: center; line-height: 18px; }
.tray .noteb { width: 40px; }
.peek { width: 4px; margin-left: 9px; border-left: 1px solid #5b6470; }
</style>
